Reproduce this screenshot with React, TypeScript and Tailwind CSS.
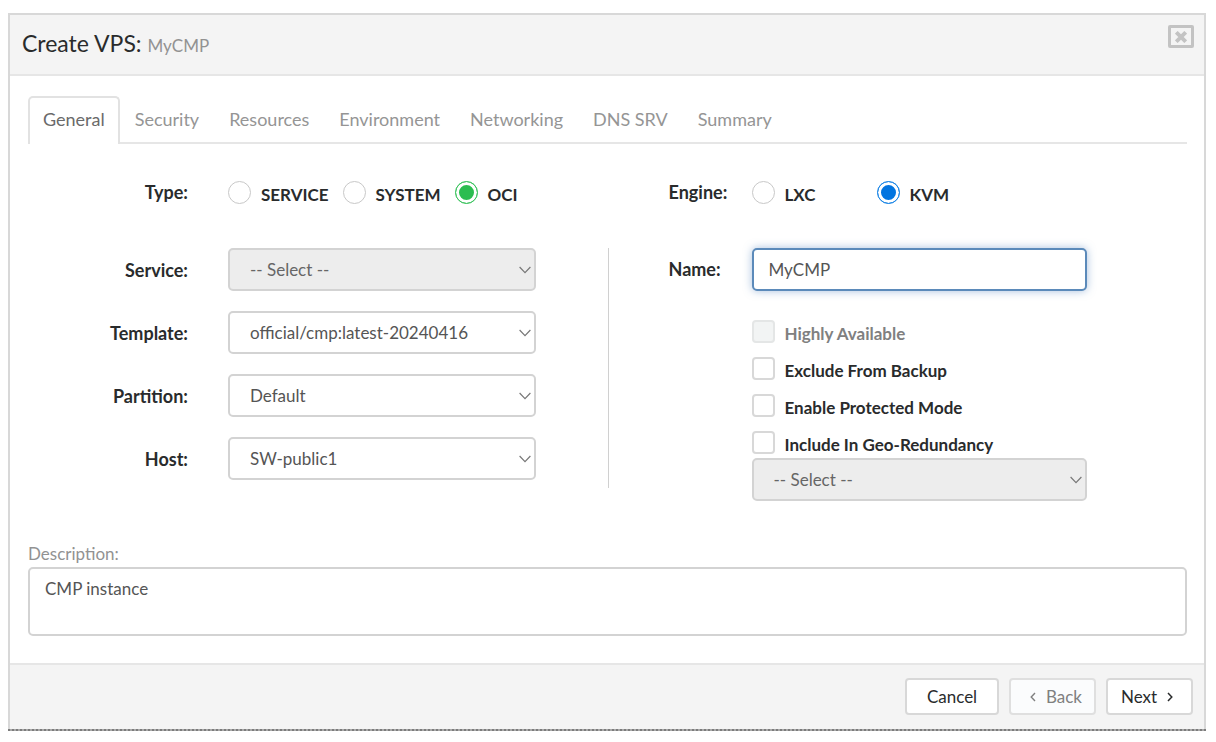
import { useState } from "react";
import type { ReactNode } from "react";

const tabs = ["General", "Security", "Resources", "Environment", "Networking", "DNS SRV", "Summary"];

function SelectBox({ id, label, value, disabled }: { id: string; label?: string; value: string; disabled?: boolean }) {
  return (
    <div className="relative w-full">
      <select
        id={id}
        aria-label={label}
        disabled={disabled}
        className="h-[43px] w-full appearance-none rounded-[5px] border-2 border-[#d3d3d3] bg-white pr-8 pl-5 text-[17px] leading-6 text-[#555] outline-none disabled:bg-[#ededed] disabled:text-[#666] disabled:opacity-100"
      >
        <option>{value}</option>
      </select>
      <svg
        className="pointer-events-none absolute top-4 right-1 h-3 w-[14px]"
        viewBox="0 0 14 12"
        fill="none"
        stroke="#777"
        strokeWidth="1.2"
      >
        <path d="M1.6 3 7 8.6 12.4 3" />
      </svg>
    </div>
  );
}

function Radio({
  name,
  label,
  checked,
  onSelect,
  tone,
}: {
  name: string;
  label: string;
  checked: boolean;
  onSelect: () => void;
  tone: string;
}) {
  return (
    <label className="flex items-center gap-[10px]">
      <input
        type="radio"
        name={name}
        checked={checked}
        onChange={onSelect}
        className={`size-[23px] shrink-0 appearance-none rounded-full border border-[#c8c8c8] bg-white checked:shadow-[inset_0_0_0_3px_#fff] ${tone}`}
      />
      <span className="pt-[6px] text-[17px] leading-6 font-bold">{label}</span>
    </label>
  );
}

function Check({ label, disabled }: { label: string; disabled?: boolean }) {
  return (
    <label className="flex h-[37px] items-start gap-[10px]">
      <input
        type="checkbox"
        disabled={disabled}
        className="size-[23px] shrink-0 appearance-none rounded-[4px] border-2 border-[#d8d8d8] bg-white checked:bg-[#0275d8] disabled:border-[#e4e6e6] disabled:bg-[#f2f4f4]"
      />
      <span
        className={
          disabled
            ? "pt-[2px] text-[17px] leading-6 font-bold text-[#808080]"
            : "pt-[2px] text-[17px] leading-6 font-bold"
        }
      >
        {label}
      </span>
    </label>
  );
}

function Field({ id, label, children }: { id: string; label: string; children: ReactNode }) {
  return (
    <div className="flex items-center gap-10">
      <label htmlFor={id} className="w-40 shrink-0 text-right text-lg leading-6 font-bold">
        {label}
      </label>
      {children}
    </div>
  );
}

export default function App() {
  const [tab, setTab] = useState("General");
  const [type, setType] = useState("OCI");
  const [engine, setEngine] = useState("KVM");

  return (
    <main className="bg-white pt-[13px] pr-[10px] pb-3 pl-2 font-['Lato',sans-serif] text-[#292b2c]">
      <section className="border-2 border-b-0 border-[#d8d8d8]">
        <header className="flex h-[61px] items-start justify-between border-b-2 border-[#e6e6e6] bg-[#f4f4f4] pt-[10px] pr-[10px] pl-3">
          <h1 className="pt-[2px] text-[23px] leading-8">
            Create VPS: <small className="text-[17px] text-[#929292]">MyCMP</small>
          </h1>
          <button
            type="button"
            aria-label="Close"
            className="flex h-[23px] w-[26px] items-center justify-center rounded-[2px] border-[3px] border-[#c3c3c3]"
          >
            <svg viewBox="0 0 12 12" className="size-3" fill="none" stroke="#c3c3c3" strokeWidth="3.8">
              <path d="M1.3 1.3l9.4 9.4M10.7 1.3l-9.4 9.4" />
            </svg>
          </button>
        </header>

        <div className="pt-5 pr-[17px] pb-[27px] pl-[18px]">
          <nav className="flex items-start border-b-2 border-[#e6e6e6]">
            {tabs.map((t) => (
              <button
                key={t}
                type="button"
                onClick={() => setTab(t)}
                className={
                  t === tab
                    ? "-mb-[2px] h-12 rounded-t-[5px] border-2 border-b-0 border-[#e2e2e2] bg-white px-[13px] pb-1 text-lg leading-6 text-[#6a6a6a]"
                    : "h-[46px] px-[15px] text-lg leading-6 text-[#959595]"
                }
              >
                {t}
              </button>
            ))}
          </nav>

          <div className="mt-[33px] grid grid-cols-2">
            <div role="radiogroup" aria-labelledby="type-label" className="flex items-center">
              <span id="type-label" className="mr-10 w-40 text-right text-lg leading-6 font-bold">
                Type:
              </span>
              <div className="flex gap-[14px]">
                {["SERVICE", "SYSTEM", "OCI"].map((t) => (
                  <Radio
                    key={t}
                    name="type"
                    label={t}
                    checked={type === t}
                    onSelect={() => setType(t)}
                    tone="checked:border-[#3cc45f] checked:bg-[#2bbd50]"
                  />
                ))}
              </div>
            </div>
            <div role="radiogroup" aria-labelledby="engine-label" className="flex items-center pl-[61px]">
              <span id="engine-label" className="w-[83px] text-lg leading-6 font-bold">
                Engine:
              </span>
              <div className="grid grid-cols-[125px_auto]">
                {["LXC", "KVM"].map((t) => (
                  <Radio
                    key={t}
                    name="engine"
                    label={t}
                    checked={engine === t}
                    onSelect={() => setEngine(t)}
                    tone="checked:border-[#1a86e6] checked:bg-[#0275e0]"
                  />
                ))}
              </div>
            </div>
          </div>

          <div className="mt-[41px] grid grid-cols-2 items-start">
            <div className="flex flex-col gap-5 pr-[72px]">
              <Field id="service" label="Service:">
                <SelectBox id="service" value="-- Select --" disabled />
              </Field>
              <Field id="template" label="Template:">
                <SelectBox id="template" value="official/cmp:latest-20240416" />
              </Field>
              <Field id="partition" label="Partition:">
                <SelectBox id="partition" value="Default" />
              </Field>
              <Field id="host" label="Host:">
                <SelectBox id="host" value="SW-public1" />
              </Field>
            </div>

            <div className="flex items-start pr-[100px]">
              <div className="mr-[60px] h-60 w-px shrink-0 bg-[#d0d0d0]" />
              <label htmlFor="name" className="w-[83px] shrink-0 pt-[9px] text-lg leading-6 font-bold">
                Name:
              </label>
              <div className="min-w-0 flex-1">
                <input
                  id="name"
                  type="text"
                  defaultValue="MyCMP"
                  className="h-[43px] w-full rounded-[5px] border-2 border-[#5b8aba] bg-white px-[15px] text-[17px] leading-6 text-[#555] shadow-[0_0_8px_rgba(80,130,190,0.5)] outline-none"
                />
                <div className="mt-[29px] h-[138px]">
                  <Check label="Highly Available" disabled />
                  <Check label="Exclude From Backup" />
                  <Check label="Enable Protected Mode" />
                  <Check label="Include In Geo-Redundancy" />
                </div>
                <SelectBox id="geo" label="Geo-redundancy target" value="-- Select --" disabled />
              </div>
            </div>
          </div>

          <label htmlFor="description" className="mt-[41px] block text-[17px] leading-6 text-[#929292]">
            Description:
          </label>
          <textarea
            id="description"
            defaultValue="CMP instance"
            className="mt-px block h-[69px] w-full resize-none rounded-[5px] border-2 border-[#d3d3d3] bg-white px-[15px] py-2 text-[17px] leading-6 text-[#555] outline-none"
          />
        </div>

        <footer className="flex h-[66px] items-start justify-end gap-[10px] border-t-2 border-[#e6e6e6] bg-[#f4f4f4] pt-[13px] pr-[11px]">
          <button
            type="button"
            className="h-[37px] w-[94px] rounded-[4px] border-2 border-[#d8d8d8] bg-white text-[17px] leading-6"
          >
            Cancel
          </button>
          <button
            type="button"
            disabled
            className="flex h-[37px] w-[87px] items-center justify-end gap-[10px] rounded-[4px] border-2 border-[#dfdfdf] bg-[#fbfcfd] pr-3 text-[17px] leading-6 text-[#808080]"
          >
            <svg viewBox="0 0 6 10" className="h-[10px] w-[6px]" fill="none" stroke="currentColor" strokeWidth="1.4">
              <path d="M5 1 1.2 5 5 9" />
            </svg>
            Back
          </button>
          <button
            type="button"
            className="flex h-[37px] w-[87px] items-center gap-[10px] rounded-[4px] border-2 border-[#d8d8d8] bg-white pl-[13px] text-[17px] leading-6"
          >
            Next
            <svg viewBox="0 0 6 10" className="h-[10px] w-[6px]" fill="none" stroke="currentColor" strokeWidth="1.5">
              <path d="M1 1l3.8 4L1 9" />
            </svg>
          </button>
        </footer>
      </section>
      <div className="border-b-2 border-dotted border-[#7c7c7c] bg-[#a8a8a8]" />
    </main>
  );
}
